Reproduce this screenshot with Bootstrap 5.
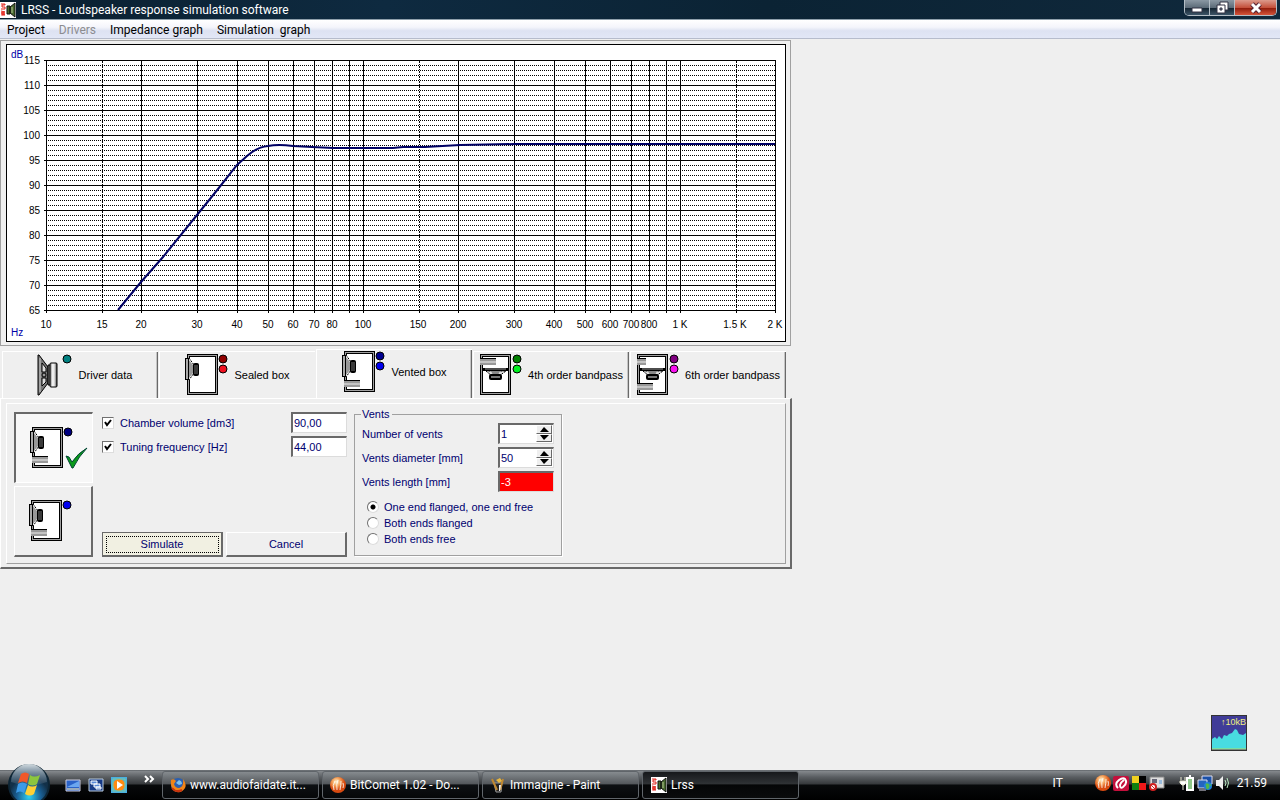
<!DOCTYPE html>
<html lang="en">
<head>
<meta charset="utf-8">
<meta name="viewport" content="width=device-width, initial-scale=1">
<title>LRSS - Loudspeaker response simulation software</title>
<link href="https://cdn.jsdelivr.net/npm/bootstrap@5.3.0/dist/css/bootstrap.min.css" rel="stylesheet">
<style>
  :root { --face: #efefef; --ink: #000070; --shade: #a0a0a0; --dark: #696969; }
  body { background: var(--face); color: #000; font: 11px/16px "Liberation Sans", Arial, sans-serif; }
  svg { display: block; flex: none; }
  button { color: inherit; padding: 0; }
  .ui-font { font-family: Roboto, "Open Sans", sans-serif; font-size: 12px; }

  .title-bar { height: 20px; background: linear-gradient(90deg, #0b2030, #0e2a40 30%, #0b2334 60%, #10293c); color: #fff; border-bottom: 1px solid #8fa0ac; }
  .title-bar .caption-text { padding-left: 5px; }
  .win-buttons { height: 16px; border: 1px solid #b4bec6; border-top: 0; border-radius: 0 0 5px 5px; overflow: hidden; margin-right: 3px; }
  .win-buttons button { width: 25px; border: 0; border-right: 1px solid #b4bec6; background: linear-gradient(#8b98a3, #5d6c79 50%, #12222f 52%, #3d5567); }
  .win-buttons button.close-win { width: 41px; border-right: 0; background: linear-gradient(#dc9a8c, #c4513c 50%, #8d1a0a 52%, #d5543a); }
  .menu-bar { height: 19px; background: linear-gradient(#fff, #f4f5fb 40%, #dde2f2 60%, #e2e7f6); border-bottom: 1px solid #b6bccc; gap: 14px; padding: 1px 0 0 7px; }
  .menu-bar a { color: #000; text-decoration: none; white-space: pre; }
  .menu-bar a.off { color: #8c8c90; }

  .work { width: 100%; max-width: 792px; padding-top: 1px; }
  .chart-frame { border: 1px solid var(--shade); padding: 3px 4px 3px 5px; margin-right: 1px; }
  .chart-box { border: 1px solid #000; background: #fff; }
  .chart-box svg { width: 100%; height: auto; font: 10px "Liberation Sans", Arial, sans-serif; }

  .tab-strip { height: 49px; margin: 3px 5px 0 2px; }
  .tab-strip button { flex: 1 1 0; min-width: 0; height: 47px; gap: 6px; background: var(--face); border: 1px solid #fff; border-width: 1px 0 0 1px; box-shadow: inset -1px 0 var(--dark), inset -2px 0 #c4c4c4; white-space: nowrap; margin-right: 1px; }
  .tab-strip button.current { height: 49px; padding-bottom: 4px; }
  .tab-strip button.flat { box-shadow: none; }
  .tab-page { border: 1px solid #fff; border-right: 2px solid var(--dark); border-bottom: 2px solid var(--dark); padding: 4px 4px 3px 5px; }
  .tab-inner { border: 1px solid #fff; border-right-color: var(--shade); border-bottom-color: var(--shade); padding: 8px 7px 6px; color: var(--ink); }

  .kinds { gap: 3px; margin-right: 9px; }
  .kind { width: 79px; height: 71px; background: var(--face); border: 1px solid #fff; border-right: 2px solid var(--dark); border-bottom: 2px solid var(--dark); padding-left: 14px; }
  .kind.pressed { background: #f7f7f7; border: 2px solid var(--dark); border-width: 2px 1px 1px 2px; border-right-color: #fff; border-bottom-color: #fff; }
  .fields { width: 245px; }
  .field-row { height: 21px; margin-bottom: 3px; gap: 6px; }
  .num { width: 56px; height: 21px; border: 2px solid var(--dark); border-right: 1px solid #dcdcdc; border-bottom: 1px solid #dcdcdc; background: #fff; color: var(--ink); padding: 0 0 1px 1px; border-radius: 0; }
  input.num { line-height: 16px; }
  .num.alarm { background: #f00; color: #fff; }
  .num input { width: 35px; border: 0; padding: 0; color: inherit; background: none; }
  .spin { width: 16px; }
  .spin button { height: 9px; border: 1px solid #fff; border-right-color: var(--dark); border-bottom-color: var(--dark); background: var(--face); }
  .tick, .dot { appearance: none; margin: 0; width: 12px; height: 12px; flex: none; }
  .tick { border: 1px solid #707070; border-right-color: #ddd; border-bottom-color: #ddd; background: #fff; }
  .tick:checked { background: #fff url("data:image/svg+xml,%3Csvg xmlns='http://www.w3.org/2000/svg' viewBox='0 0 10 10'%3E%3Cpath d='M2 4l2 3 4-5' fill='none' stroke='%23000' stroke-width='2'/%3E%3C/svg%3E"); }
  .dot { border: 1px solid #707070; border-right-color: #ddd; border-bottom-color: #ddd; border-radius: 50%; background: #fff; }
  .dot:checked { background: radial-gradient(circle, #000 2px, #fff 3px); }
  .push { flex: 1 1 0; height: 25px; background: var(--face); border: 1px solid #fff; border-right: 2px solid var(--dark); border-bottom: 2px solid var(--dark); }
  .push.ready { background: #f1f0e2; border: 1px solid var(--dark); border-right-width: 2px; border-bottom-width: 2px; outline: 1px dotted #000; outline-offset: -5px; }
  .vents { width: 208px; height: 150px; margin: -6px 0 0 7px; border: 1px solid var(--shade); box-shadow: 1px 1px #fff; padding: 0 7px; }
  .vents legend { float: none; width: auto; font-size: 11px; line-height: 16px; margin: 0 0 1px -1px; padding: 0 2px 0 1px; background: var(--face); }
  .pick { height: 16px; gap: 5px; padding-left: 5px; }

  .gadget { margin: 0 33px 19px 0; }
  .task-bar { height: 30px; background: linear-gradient(#50555a, #85898d 1px, #5a5e62 7px, #36393c 14px, #07090b 15px, #000); color: #fff; }
  .orb { margin: -6px 0 0 8px; }
  .quick { gap: 7px; margin-left: 15px; }
  .more { margin-left: 17px; }
  .tasks { gap: 3px; margin-left: 7px; }
  .task { width: 157px; height: 28px; gap: 4px; padding-left: 7px; border: 1px solid #60656a; border-radius: 3px; background: linear-gradient(#868b8f, #54585c 45%, #0d1013 50%, #060708); white-space: nowrap; }
  .task.active { background: linear-gradient(#16181b, #2f3235 45%, #050607 50%, #0a0b0c); padding-left: 8px; }
  .tray { gap: 2px; padding-right: 13px; }
  .tray .lang { margin-right: 30px; }
  .tray .power { margin-left: 12px; }
</style>
</head>
<body class="d-flex flex-column min-vh-100">

<svg width="0" height="0" class="position-absolute" aria-hidden="true">
  <defs>
    <g id="side-driver">
      <path d="M4 4h3v1l2 3v13l-2 4v1h-3z" fill="#fff"/>
      <path d="M0 4h4v22h-4z"/><path d="M1 5h2v20h-2z" fill="#aaa"/>
      <path d="M4 6L8 11V19L4 24z" fill="#999"/><path d="M4 4L9 11V19L4 26" fill="none" stroke="#000" stroke-dasharray="2 1"/>
      <rect x="8" y="9" width="6" height="13" rx="2"/>
      <path d="M10 11V20M12 11V20" stroke="#777"/>
    </g>
    <g id="cabinet" shape-rendering="crispEdges">
      <path d="M0 0h31v41h-31z"/><path d="M1 1h29v39h-29z" fill="#a0a0a0"/><path d="M2 2h27v37h-27z"/><path d="M3 3h25v35h-25z" fill="#fff"/>
    </g>
    <g id="vent" shape-rendering="crispEdges">
      <path d="M0 0h16v1h-16z"/><path d="M0 1h16v6h-16z" fill="#999"/><path d="M0 3h16v2h-16z" fill="#c4c4c4"/>
    </g>
    <g id="down-driver">
      <path d="M2 14h27v3h-27z" fill="#000"/><path d="M5 15H26" stroke="#999"/>
      <path d="M6 17L12 22H19L26 17z" fill="#ddd" stroke="#000" stroke-dasharray="2 1"/>
      <path d="M11 17h9l-2 4h-5z" fill="#888"/>
      <rect x="9" y="20" width="13" height="6" rx="2"/><path d="M11 23H20" stroke="#777" stroke-width="2"/>
    </g>
    <linearGradient id="metal"><stop offset="0" stop-color="#777"/><stop offset=".4" stop-color="#fff"/><stop offset=".7" stop-color="#ccc"/><stop offset="1" stop-color="#333"/></linearGradient>
    <g id="vented-box"><use href="#cabinet" x="2"/><use href="#side-driver"/><use href="#vent" x="2" y="29"/></g>
    <g id="lrss">
      <path d="M0 0h16v16h-16z" fill="#fff"/>
      <path d="M1 2h4v1h-3v2h3v2h-4M1 9l4 1-4 1 4 1-4 1M2 13h3" fill="none" stroke="#e2231a"/>
      <path d="M7 4h3v8h-3zM10 5l5-4v14l-5-4z" fill="#49692f" stroke="#111"/><path d="M12 5v6" stroke="#b5c894"/>
    </g>
    <radialGradient id="fire" cx=".4" cy=".3"><stop offset="0" stop-color="#fff3d0"/><stop offset=".5" stop-color="#f4a25a"/><stop offset="1" stop-color="#d84a10"/></radialGradient>
    <g id="comet"><circle cx="8" cy="8" r="8" fill="url(#fire)"/><path d="M4 13Q2 8 5 4M7 13Q6 7 8 3M10 13Q11 8 11 4M13 11Q14 8 13 6" stroke="#fff" stroke-opacity=".8" fill="none"/></g>
  </defs>
</svg>

<header>
  <div class="title-bar ui-font d-flex align-items-center">
    <svg width="16" height="16" viewBox="0 0 16 16"><use href="#lrss"/></svg>
    <span class="caption-text">LRSS - Loudspeaker response simulation software</span>
    <div class="win-buttons d-flex ms-auto align-self-start">
      <button type="button" aria-label="Minimize"><svg class="mx-auto" width="12" height="12"><path d="M1 6h10v4h-10z" fill="#fff" stroke="#334"/></svg></button>
      <button type="button" aria-label="Restore"><svg class="mx-auto" width="13" height="13"><path d="M4 1h8v8h-8z" fill="#fff" stroke="#334"/><path d="M1 4h8v8h-8z" fill="#fff" stroke="#334"/><path d="M4 7h2v2h-2z" fill="#89a" stroke="#334"/></svg></button>
      <button type="button" class="close-win" aria-label="Close"><svg class="mx-auto" width="12" height="12"><path d="M2 2L10 10M10 2L2 10" stroke="#523" stroke-width="5"/><path d="M2 2L10 10M10 2L2 10" stroke="#fff" stroke-width="3"/></svg></button>
    </div>
  </div>
  <nav class="menu-bar ui-font d-flex align-items-center">
    <a href="#">Project</a><a href="#" class="off">Drivers</a><a href="#">Impedance graph</a><a href="#">Simulation  graph</a>
  </nav>
</header>

<main class="flex-grow-1 d-flex">
  <div class="work">
    <div class="chart-frame">
      <div class="chart-box">
        <svg viewBox="7 45 778 296" role="img" aria-label="Frequency response">
          <defs><pattern id="minor" x="46" y="60" width="2" height="5" patternUnits="userSpaceOnUse"><path d="M0 0h1v1h-1z"/></pattern></defs>
          <rect x="46" y="60" width="730" height="250" fill="url(#minor)" shape-rendering="crispEdges"/>
          <g transform="translate(.5 .5)" stroke="#000" fill="none" shape-rendering="crispEdges">
            <path d="M43 60H775M43 85H775M43 110H775M43 135H775M43 160H775M43 185H775M43 210H775M43 235H775M43 260H775M43 285H775M43 310H775"/>
            <path d="M46 60V312M141 60V312M197 60V312M237 60V312M268 60V312M293 60V312M314 60V312M332 60V312M349 60V312M363 60V312M458 60V312M514 60V312M554 60V312M585 60V312M610 60V312M631 60V312M649 60V312M666 60V312M680 60V312M775 60V312"/>
            <path d="M102 60V312M419 60V312M736 60V312" stroke-dasharray="2 1 1 1"/>
          </g>
          <path d="M118 310L141 282 163 257 197 215 218 189 237 165 247 156Q257 147 268 146Q278 144 293 146L312 147 333 148H393L403 147H425L460 145 515 144H775" fill="none" stroke="#000064" stroke-width="2"/>
          <g text-anchor="end">
            <text x="40" y="64">115</text><text x="40" y="89">110</text><text x="40" y="114">105</text><text x="40" y="139">100</text><text x="40" y="164">95</text><text x="40" y="189">90</text><text x="40" y="214">85</text><text x="40" y="239">80</text><text x="40" y="264">75</text><text x="40" y="289">70</text><text x="40" y="314">65</text>
          </g>
          <g text-anchor="middle">
            <text x="46" y="328">10</text><text x="102" y="328">15</text><text x="141" y="328">20</text><text x="197" y="328">30</text><text x="237" y="328">40</text><text x="268" y="328">50</text><text x="293" y="328">60</text><text x="314" y="328">70</text><text x="332" y="328">80</text><text x="363" y="328">100</text><text x="418" y="328">150</text><text x="458" y="328">200</text><text x="514" y="328">300</text><text x="554" y="328">400</text><text x="585" y="328">500</text><text x="610" y="328">600</text><text x="631" y="328">700</text><text x="649" y="328">800</text><text x="680" y="328">1 K</text><text x="735" y="328">1.5 K</text><text x="775" y="328">2 K</text>
          </g>
          <g fill="#0000a8"><text x="11" y="58">dB</text><text x="11" y="336">Hz</text></g>
        </svg>
      </div>
    </div>

    <div class="tab-strip d-flex align-items-end" role="tablist">
      <button type="button" role="tab" class="d-flex align-items-center justify-content-center">
        <svg class="ms-2" width="36" height="42" viewBox="0 0 36 42"><path d="M1 1h1L11 13V29L2 41H1z" fill="#777" stroke="#000"/><path d="M3 4V38" stroke="#ccc"/><path d="M5 9L9 14V18H5zM5 32L9 28V24H5z" fill="#ddd" stroke="#000"/><circle cx="7" cy="21" r="2" fill="#999" stroke="#000"/><path d="M11 11h3v20h-3z" fill="#777" stroke="#000"/><rect x="13" y="9" width="7" height="24" rx="1" fill="url(#metal)" stroke="#000"/><circle cx="30" cy="5" r="4" fill="#008080" stroke="#000"/></svg>
        <span>Driver data</span>
      </button>
      <button type="button" role="tab" class="flat d-flex align-items-center justify-content-center">
        <svg width="43" height="42" viewBox="0 0 43 42"><use href="#cabinet" x="2"/><use href="#side-driver"/><g stroke="#000"><circle cx="38" cy="5" r="4" fill="#900000"/><circle cx="38" cy="15" r="4" fill="#f01020"/></g></svg>
        <span>Sealed box</span>
      </button>
      <button type="button" role="tab" aria-selected="true" class="current d-flex align-items-center justify-content-center">
        <svg width="43" height="42" viewBox="0 0 43 42"><use href="#vented-box"/><g stroke="#000"><circle cx="38" cy="5" r="4" fill="#000090"/><circle cx="38" cy="15" r="4" fill="#0000f0"/></g></svg>
        <span>Vented box</span>
      </button>
      <button type="button" role="tab" class="d-flex align-items-center justify-content-center">
        <svg width="42" height="42" viewBox="0 0 42 42"><use href="#cabinet"/><use href="#vent" y="4"/><use href="#down-driver"/><g stroke="#000"><circle cx="37" cy="5" r="4" fill="#008000"/><circle cx="37" cy="15" r="4" fill="#00f020"/></g></svg>
        <span>4th order bandpass</span>
      </button>
      <button type="button" role="tab" class="d-flex align-items-center justify-content-center">
        <svg width="42" height="42" viewBox="0 0 42 42"><use href="#cabinet"/><svg width="9" height="42"><use href="#vent" y="4"/></svg><use href="#vent" y="29"/><use href="#down-driver"/><g stroke="#000"><circle cx="37" cy="5" r="4" fill="#800080"/><circle cx="37" cy="15" r="4" fill="#f810f0"/></g></svg>
        <span>6th order bandpass</span>
      </button>
    </div>

    <div class="tab-page">
      <form class="tab-inner d-flex">
        <div class="kinds d-flex flex-column">
          <button type="button" class="kind pressed d-flex align-items-center" aria-label="Vented box, design"><svg width="59" height="43" viewBox="0 0 59 43"><use href="#vented-box"/><circle cx="38" cy="5" r="4" fill="#000080" stroke="#000"/><path d="M36 29L39 30 42 35Q48 26 57 21Q49 29 43 41H42Z" fill="#0a9a1a" stroke="#043"/></svg></button>
          <button type="button" class="kind d-flex align-items-center" aria-label="Vented box, second"><svg width="59" height="43" viewBox="0 0 59 43"><use href="#vented-box"/><circle cx="38" cy="5" r="4" fill="#0000f0" stroke="#000"/></svg></button>
        </div>
        <div class="fields d-flex flex-column">
          <div class="field-row d-flex align-items-center"><input class="tick" type="checkbox" id="vol" checked><label for="vol">Chamber volume [dm3]</label><input class="num ms-auto" type="text" value="90,00" aria-label="Chamber volume"></div>
          <div class="field-row d-flex align-items-center"><input class="tick" type="checkbox" id="tun" checked><label for="tun">Tuning frequency [Hz]</label><input class="num ms-auto" type="text" value="44,00" aria-label="Tuning frequency"></div>
          <div class="d-flex mt-auto" style="gap:3px"><button type="button" class="push ready">Simulate</button><button type="button" class="push">Cancel</button></div>
        </div>
        <fieldset class="vents">
          <legend>Vents</legend>
          <div class="field-row d-flex align-items-center justify-content-between"><label for="cnt">Number of vents</label><div class="num d-flex"><input type="text" id="cnt" value="1"><div class="spin d-flex flex-column"><button type="button" aria-label="More vents"><svg class="mx-auto" width="9" height="5"><path d="M0 5L4 0 9 5z"/></svg></button><button type="button" aria-label="Fewer vents"><svg class="mx-auto" width="9" height="5"><path d="M0 0L4 5 9 0z"/></svg></button></div></div></div>
          <div class="field-row d-flex align-items-center justify-content-between"><label for="dia">Vents diameter [mm]</label><div class="num d-flex"><input type="text" id="dia" value="50"><div class="spin d-flex flex-column"><button type="button" aria-label="Wider"><svg class="mx-auto" width="9" height="5"><path d="M0 5L4 0 9 5z"/></svg></button><button type="button" aria-label="Narrower"><svg class="mx-auto" width="9" height="5"><path d="M0 0L4 5 9 0z"/></svg></button></div></div></div>
          <div class="field-row d-flex align-items-center justify-content-between"><label for="len">Vents length [mm]</label><input class="num alarm" type="text" id="len" value="-3"></div>
          <div class="pt-1">
            <div class="pick d-flex align-items-center"><input class="dot" type="radio" name="ends" id="e1" checked><label for="e1">One end flanged, one end free</label></div>
            <div class="pick d-flex align-items-center"><input class="dot" type="radio" name="ends" id="e2"><label for="e2">Both ends flanged</label></div>
            <div class="pick d-flex align-items-center"><input class="dot" type="radio" name="ends" id="e3"><label for="e3">Both ends free</label></div>
          </div>
        </fieldset>
      </form>
    </div>
  </div>

  <div class="gadget ms-auto align-self-end">
    <svg width="36" height="36" viewBox="0 0 36 36"><path d="M0 0h36v36h-36z" fill="#403c98"/><path d="M1 24l3-2 2 2 2-3 3 3 2-4 3 1 2-2 3-1 3-4 2 1 2 4 4 1 3-2V34H1z" fill="#48dce0"/><path d="M1 34H35" stroke="#b0e060"/><path d="M0 0h36v36h-36z" fill="none" stroke="#333" stroke-width="2"/><text x="35" y="10" text-anchor="end" font-size="9" fill="#f0f080">↑10kB</text></svg>
  </div>
</main>

<footer class="task-bar ui-font d-flex align-items-center">
  <button type="button" class="orb border-0 bg-transparent align-self-start" aria-label="Start">
    <svg width="42" height="36" viewBox="0 0 42 36"><defs><radialGradient id="glass" cy=".8"><stop offset="0" stop-color="#30d0f0"/><stop offset=".6" stop-color="#1a5f94"/><stop offset="1" stop-color="#123048"/></radialGradient><linearGradient id="shine" x2="0" y2="1"><stop offset="0" stop-color="#e8f0f4" stop-opacity=".9"/><stop offset="1" stop-color="#9ab" stop-opacity=".1"/></linearGradient></defs>
      <circle cx="21" cy="21" r="20" fill="url(#glass)" stroke="#0d2535" stroke-width="2"/><path d="M3 18A18 18 0 0 1 39 18Q21 25 3 18z" fill="url(#shine)"/>
      <path d="M13 10q4-3 8 0l-2 9q-4-3-9 0z" fill="#f0582a"/><path d="M22 11q4 3 10 0l-3 9q-4 3-9 0z" fill="#8cc63e"/><path d="M10 20q4-3 9 0l-3 9q-4-3-8 0z" fill="#3c9be8"/><path d="M20 21q4 3 9 0l-3 9q-4 3-9 0z" fill="#ffd034"/></svg>
  </button>
  <div class="quick d-flex align-items-center">
    <svg width="16" height="16"><path d="M1 3h14v11h-14z" fill="#2a62c8" stroke="#ccd"/><path d="M2 10L14 4V10z" fill="#6aa6f0"/><path d="M2 12H14" stroke="#9ab" stroke-width="2"/></svg>
    <svg width="16" height="16"><path d="M1 2h14v12h-14z" fill="#173a86" stroke="#bcd"/><path d="M3 4h6v3h-6zM6 7h6v3h-6zM8 10h5v2h-5z" fill="#5a8ad8" stroke="#fff"/></svg>
    <svg width="16" height="16"><path d="M0 0h16v16h-16z" fill="#4ab0e0"/><circle cx="8" cy="8" r="6" fill="#ff8a10"/><path d="M2 2h12v12h-12z" fill="none" stroke="#7ac8a0"/><path d="M6 4L12 8 6 12z" fill="#fff"/></svg>
  </div>
  <svg width="11" height="10" viewBox="0 0 11 10" class="more align-self-start mt-1"><path d="M1 2l3 3-3 3M6 2l3 3-3 3" fill="none" stroke="#fff" stroke-width="2"/></svg>
  <div class="tasks d-flex">
    <button type="button" class="task d-flex align-items-center"><svg width="16" height="16"><circle cx="8" cy="8" r="7" fill="#2b5fb0"/><path d="M9 3q3 1 3 4l-3 1-3-2z" fill="#7ac0f0"/><path d="M1 3Q4 1 6 4L4 7Q5 11 9 11Q14 10 13 2Q17 7 15 11Q12 16 7 15Q0 14 1 3z" fill="#f08418"/><path d="M2 11q4 5 10 2" stroke="#c8340c" stroke-width="2" fill="none"/></svg><span>www.audiofaidate.it...</span></button>
    <button type="button" class="task d-flex align-items-center"><svg width="16" height="16"><use href="#comet"/></svg><span>BitComet 1.02 - Do...</span></button>
    <button type="button" class="task d-flex align-items-center"><svg width="16" height="16"><path d="M4 6h8l-1 9h-5z" fill="#222" stroke="#999"/><path d="M2 2l5 11M13 2l-3 11" stroke="#c08830" stroke-width="2"/><path d="M6 3l4-2 2 3-3 2z" fill="#e8b840"/><path d="M9 8h2l-1 6h-1z" fill="#eee"/></svg><span>Immagine - Paint</span></button>
    <button type="button" class="task active d-flex align-items-center"><svg width="16" height="16"><use href="#lrss"/></svg><span>Lrss</span></button>
  </div>
  <div class="tray d-flex align-items-center ms-auto mb-1">
    <span class="lang">IT</span>
    <svg width="16" height="16"><use href="#comet"/></svg>
    <svg width="16" height="16"><rect width="16" height="15" y="1" rx="2" fill="#c4103c"/><path d="M5 13Q1 9 6 5Q10 2 12 4Q15 8 10 12Q7 14 7 10Q8 7 11 5" fill="none" stroke="#fff" stroke-width="2"/></svg>
    <svg width="16" height="16"><path d="M1 1h7v7h-7z" fill="#f0d020"/><path d="M8 1h7v7h-7z"/><path d="M1 8h7v7h-7z" fill="#108010"/><path d="M8 8h7v7h-7z" fill="#f01818"/></svg>
    <svg width="16" height="16"><path d="M1 2h14v11h-14z" fill="#ddd" stroke="#888"/><path d="M3 4h5v4h-5z" fill="#667"/><path d="M10 5h3v4h-3z" fill="#9bd"/><circle cx="4" cy="12" r="3" fill="#fff" stroke="#d02020" stroke-width="2"/><path d="M2 10l4 4" stroke="#d02020"/></svg>
    <svg width="16" height="16" class="power"><path d="M8 3h6v12h-6z" fill="#8fc88a" stroke="#fff" stroke-width="2"/><path d="M10 0h2v2h-2z" fill="#fff"/><path d="M2 2v3M6 2v3M1 6h6v2l-2 2h-2l-2-2zM4 9v6" fill="#fff" stroke="#e8e8d0"/></svg>
    <svg width="16" height="16"><path d="M5 1h10v8h-10z" fill="#1b50a8" stroke="#dde"/><path d="M1 5h9v8h-9z" fill="#2465c0" stroke="#dde"/><path d="M2 15h7" stroke="#dde"/><circle cx="11" cy="11" r="4" fill="#2080d8"/><path d="M9 9q3-1 3 2t-2 3zM13 9l1 2" fill="#50b848" stroke="#50b848"/></svg>
    <svg width="16" height="16"><path d="M1 5h3l4-4v14l-4-4h-3z" fill="#eee"/><path d="M10 5q2 3 0 6M12 3q3 5 0 10" fill="none" stroke="#b8e8c0"/></svg>
    <span class="ms-1">21.59</span>
  </div>
</footer>

<script src="https://cdn.jsdelivr.net/npm/bootstrap@5.3.0/dist/js/bootstrap.bundle.min.js"></script>
</body>
</html>
